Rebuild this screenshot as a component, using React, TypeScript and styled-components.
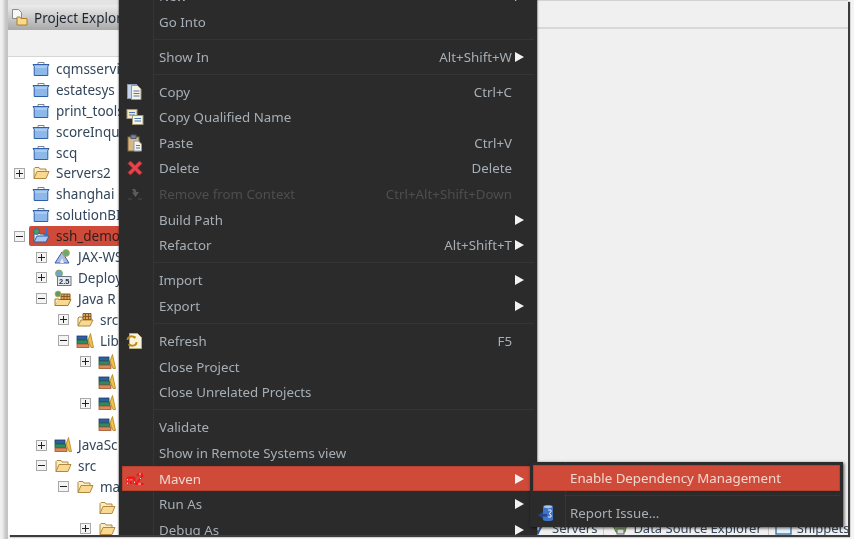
import styled, { createGlobalStyle } from "styled-components";

const GlobalStyle = createGlobalStyle`
  html, body {
    margin: 0;
    padding: 0;
    background: #f2f2f2;
    overflow: hidden;
  }
  svg {
    flex-shrink: 0;
  }
`;

const Page = styled.div`
  width: 854px;
  height: 539px;
  padding: 0 6px 4px 8px;
  box-sizing: border-box;
  background: linear-gradient(to right, #f0f0f0 2px, #c4c4c4 6px, #c4c4c4 8px, #f4f4f4 8px);
  font-family: "Noto Sans", "Open Sans", sans-serif;
`;

const Workbench = styled.div`
  position: relative;
  display: flex;
  width: 840px;
  height: 535px;
  overflow: hidden;
  background: #f0f0f0;
  box-shadow: 2px 2px 1px #3c3c3c;
  filter: blur(0.35px);
`;

const LeftPanel = styled.div`
  display: flex;
  flex-direction: column;
  width: 112px;
  flex-shrink: 0;
  padding-top: 5px;
  box-sizing: border-box;
  background: #e4e4e4;
`;

const PanelTab = styled.div`
  display: flex;
  align-items: center;
  gap: 5px;
  height: 25px;
  padding-left: 3px;
  flex-shrink: 0;
  border-radius: 5px 0 0 0;
  background: linear-gradient(#ececec, #a9a9a9);
  color: #1f2733;
  font-size: 13.5px;
  white-space: nowrap;
  overflow: hidden;
`;

const PanelToolbar = styled.div`
  height: 27px;
  flex-shrink: 0;
  background: #f1f1f1;
  border-bottom: 1px solid #d6d6d6;
  box-sizing: border-box;
`;

const Tree = styled.div`
  flex: 1;
  padding-top: 1.6px;
  background: #ffffff;
  overflow: hidden;
`;

const TreeRow = styled.div<{ $level: number }>`
  display: flex;
  align-items: center;
  height: 20.9px;
  padding-left: ${(p) => 6 + p.$level * 22}px;
  white-space: nowrap;
`;

const ExpanderSlot = styled.div`
  display: flex;
  align-items: center;
  width: 18px;
  flex-shrink: 0;
`;

const Expander = styled.div`
  position: relative;
  width: 9px;
  height: 9px;
  background: #f4f4f4;
  border: 1px solid #a8a8a8;

  &::before {
    content: "";
    position: absolute;
    left: 1px;
    right: 1px;
    top: 4px;
    height: 1px;
    background: #222;
  }
`;

const ExpanderPlus = styled(Expander)`
  &::after {
    content: "";
    position: absolute;
    top: 1px;
    bottom: 1px;
    left: 4px;
    width: 1px;
    background: #222;
  }
`;

const RowContent = styled.div<{ $selected?: boolean }>`
  display: flex;
  align-items: center;
  gap: 6px;
  height: 20px;
  flex: 1;
  margin-left: ${(p) => (p.$selected ? "-3px" : "0")};
  padding-left: ${(p) => (p.$selected ? "3px" : "0")};
  border-radius: 2px;
  background: ${(p) => (p.$selected ? "#cf4a39" : "transparent")};
  color: ${(p) => (p.$selected ? "#2c1f20" : "#33465c")};
  font-size: 13.5px;
`;

const RightPanel = styled.div`
  flex: 1;
  min-width: 0;
  display: flex;
  flex-direction: column;
  border-top: 1px solid #d2d2d2;
  background: #f0f0f0;
`;

const EditorHead = styled.div`
  height: 26px;
  flex-shrink: 0;
  border-bottom: 2px solid #d8d8d8;
`;

const EditorBody = styled.div`
  flex: 1;
`;

const BottomTabs = styled.div`
  display: flex;
  align-items: center;
  height: 15px;
  padding-left: 406px;
  flex-shrink: 0;
  color: #33465c;
  font-size: 13px;
  white-space: nowrap;
  overflow: hidden;
`;

const BottomTab = styled.div`
  display: flex;
  align-items: center;
  gap: 4px;
  height: 100%;
  padding: 0 6px;
  border-right: 1px solid #c8c8c8;
`;

const Menu = styled.div`
  position: absolute;
  left: 111px;
  top: -16.9px;
  width: 418px;
  padding: 0 3px;
  box-sizing: border-box;
  background: linear-gradient(to right, #2b2b2b 34px, #353535 34px, #353535 35px, #2b2b2b 35px);
  box-shadow: 0 0 2px #222;
`;

const SubMenu = styled.div`
  position: absolute;
  left: 522px;
  top: 462px;
  width: 313px;
  height: 65px;
  padding: 3px 3px 0;
  box-sizing: border-box;
  background: linear-gradient(to right, #2b2b2b 35px, #353535 35px, #353535 36px, #2b2b2b 36px);
  box-shadow: 1px 1px 3px rgba(0, 0, 0, 0.7);
`;

const MenuRow = styled.div<{ $active?: boolean; $disabled?: boolean }>`
  display: flex;
  align-items: center;
  height: 25.6px;
  padding-right: 10px;
  box-sizing: border-box;
  background: ${(p) => (p.$active ? "#cf4a38" : "transparent")};
  box-shadow: ${(p) => (p.$active ? "inset 0 0 0 1px #b8402f" : "none")};
  color: ${(p) => (p.$disabled ? "#4e4e4e" : p.$active ? "#f0d8d0" : "#a7afb6")};
  font-size: 13.3px;
  white-space: nowrap;
`;

const MenuIcon = styled.div`
  display: flex;
  align-items: center;
  justify-content: center;
  width: 26px;
  margin-right: 11px;
  flex-shrink: 0;
`;

const MenuLabel = styled.div`
  flex: 1;
`;

const MenuShortcut = styled.div`
  margin-right: 2px;
`;

const ArrowSlot = styled.div`
  display: flex;
  justify-content: flex-end;
  width: 10px;
  flex-shrink: 0;
`;

const Arrow = styled.div`
  width: 0;
  height: 0;
  border-left: 9px solid #f2f2f2;
  border-top: 5px solid transparent;
  border-bottom: 5px solid transparent;
`;

const MenuSeparator = styled.div`
  display: flex;
  align-items: center;
  height: 9.5px;
  margin-left: 31px;

  &::after {
    content: "";
    flex: 1;
    height: 1px;
    background: #353535;
  }
`;

const ProjectIcon = () => (
  <svg width="18" height="18" viewBox="0 0 18 18">
    <path d="M6 4V2.5h6V4" fill="none" stroke="#7b8794" strokeWidth="1" />
    <path d="M1 4.5h16l-1.2 2v9H2.2v-9z" fill="#8db8ea" stroke="#2e5fa8" strokeWidth="1" />
    <path d="M3 6.5h12v1H3z" fill="#c9def6" />
  </svg>
);

const OpenFolderIcon = () => (
  <svg width="18" height="18" viewBox="0 0 18 18">
    <path d="M2 14.5V4.5l1-1h4l1 1.5h6v2.5" fill="#fbecc4" stroke="#b08840" strokeWidth="1" />
    <path d="M2 14.5l3-7h12l-3 7z" fill="#f9d98f" stroke="#b08840" strokeWidth="1" />
  </svg>
);

const PackageFolderIcon = () => (
  <svg width="18" height="18" viewBox="0 0 18 18">
    <path d="M2 15V7l1-1h3l1 1h8v2" fill="#fbecc4" stroke="#b08840" strokeWidth="1" />
    <path d="M2 15l3-6h12l-3 6z" fill="#f9d98f" stroke="#b08840" strokeWidth="1" />
    <path d="M7 2.5h8v6H7zM9.5 2.5v6M12.5 2.5v6M7 5.5h8" fill="#d9a85a" stroke="#8c5a20" strokeWidth="1" />
  </svg>
);

const JavaProjectIcon = () => (
  <svg width="18" height="18" viewBox="0 0 18 18">
    <path d="M2 15V7l1-1h4l1 1h6v2" fill="#fbecc4" stroke="#2e5fa8" strokeWidth="1" />
    <path d="M2 15l3-6h12l-3 6z" fill="#a9c8ee" stroke="#2e5fa8" strokeWidth="1" />
    <circle cx="4.5" cy="4.5" r="3" fill="#4d9a5f" stroke="#2e5fa8" strokeWidth="0.8" />
    <path d="M14.5 1v6c0 1.5-2.5 1.5-3 0" fill="none" stroke="#3b6fc0" strokeWidth="1.5" />
  </svg>
);

const JaxWsIcon = () => (
  <svg width="18" height="18" viewBox="0 0 18 18">
    <path d="M1 15L8 4l7 11z" fill="#a9bde6" stroke="#3a5ca8" strokeWidth="1" />
    <path d="M6 15l2-5 2 5z" fill="#e8eefa" />
    <circle cx="12" cy="5" r="3.5" fill="#6ba86f" stroke="#c8a850" strokeWidth="0.8" />
  </svg>
);

const DeployIcon = () => (
  <svg width="18" height="18" viewBox="0 0 18 18">
    <circle cx="5" cy="4.5" r="3.5" fill="#6ba8c8" stroke="#8c9a50" strokeWidth="0.8" />
    <rect x="3.5" y="7.5" width="13.5" height="9" fill="#e6ebf2" stroke="#6a7482" strokeWidth="1" />
    <text x="10.2" y="15" textAnchor="middle" fontSize="7.5" fontWeight="700" fill="#25344a" fontFamily="Liberation Sans, sans-serif">
      2.5
    </text>
  </svg>
);

const JavaResourcesIcon = () => (
  <svg width="18" height="18" viewBox="0 0 18 18">
    <path d="M1 15.5l3-6h13l-3 6z" fill="#f9d98f" stroke="#a87a30" strokeWidth="1" />
    <path d="M1 15.5V9h4" fill="#fbecc4" stroke="#a87a30" strokeWidth="1" />
    <path d="M7 4h9v5.5H7zM10 4v5.5M13 4v5.5M7 6.5h9" fill="#d9a85a" stroke="#8c5a20" strokeWidth="1" />
    <circle cx="4" cy="4" r="3" fill="#5c9c68" stroke="#c8a850" strokeWidth="0.8" />
  </svg>
);

const LibraryIcon = () => (
  <svg width="18" height="18" viewBox="0 0 18 18">
    <rect x="1" y="4" width="10" height="3.5" fill="#2f5f9e" stroke="#1d3c6e" strokeWidth="0.8" />
    <rect x="1" y="8" width="11" height="3.5" fill="#2e8a63" stroke="#1c5c40" strokeWidth="0.8" />
    <rect x="1" y="12" width="12" height="3.5" fill="#d9895a" stroke="#9c5428" strokeWidth="0.8" />
    <path d="M12 8L14.5 1.5l3 14h-2.5z" fill="#f2c04a" stroke="#b08420" strokeWidth="0.8" />
  </svg>
);

const TabFolderIcon = () => (
  <svg width="18" height="19" viewBox="0 0 18 19">
    <path d="M1.5 1.5h6l3 3v6h-9z" fill="#f7f7f7" stroke="#8a8a8a" strokeWidth="1" />
    <path d="M6 17V9h3l1 1.5h6V17z" fill="#fbd98a" stroke="#a8802e" strokeWidth="1" />
  </svg>
);

const CopyIcon = () => (
  <svg width="18" height="18" viewBox="0 0 18 18">
    <rect x="1.5" y="1.5" width="9" height="14" fill="#c4d4ec" stroke="#8c9cb4" />
    <path d="M5.5 2.5h6l3.5 3.5v10.5h-9.5z" fill="#f6f4e8" stroke="#a09878" />
    <path d="M7.5 8h6M7.5 10.5h6M7.5 13h6" stroke="#4a78b8" />
  </svg>
);

const CopyQualifiedIcon = () => (
  <svg width="18" height="18" viewBox="0 0 18 18">
    <rect x="1" y="1.5" width="10" height="9" fill="#f3e7c4" stroke="#a09878" />
    <path d="M3 4.5h6M3 7h6" stroke="#4a78b8" />
    <rect x="6.5" y="7.5" width="10.5" height="9" fill="#f6f4e8" stroke="#a09878" />
    <path d="M8.5 10.5h6.5M8.5 13h6.5" stroke="#4a78b8" />
  </svg>
);

const PasteIcon = () => (
  <svg width="18" height="18" viewBox="0 0 18 18">
    <rect x="2" y="3" width="11" height="14" fill="#d6b888" stroke="#8a6a38" />
    <rect x="5" y="1" width="5" height="3.5" fill="#7a869c" stroke="#4f5a70" />
    <path d="M8 7h4.5l3 3v7H8z" fill="#f6f4e8" stroke="#8c98a8" />
    <path d="M10 11.5h4M10 14h4" stroke="#4a78b8" />
  </svg>
);

const DeleteIcon = () => (
  <svg width="18" height="18" viewBox="0 0 18 18">
    <path d="M2 4.5L4.5 2 9 6.5 13.5 2 16 4.5 11.5 9 16 13.5 13.5 16 9 11.5 4.5 16 2 13.5 6.5 9z" fill="#e8434a" stroke="#c02a34" strokeWidth="0.6" />
  </svg>
);

const RemoveIcon = () => (
  <svg width="18" height="18" viewBox="0 0 18 18">
    <path d="M6 4l3 0 1.5 3h2.5L9.5 12 6 7.5h2z" fill="#5c5c5c" />
    <path d="M2 14h4M12 14h4" stroke="#4a4a4a" />
  </svg>
);

const RefreshIcon = () => (
  <svg width="18" height="18" viewBox="0 0 18 18">
    <path d="M3.5 1.5h8l4 4v11h-12z" fill="#f8f4dc" stroke="#b4ac84" />
    <path d="M1.5 8a4 3.5 0 0 1 7-2.5l1-1M10.5 10a4 3.5 0 0 1-7 2.5l-1 1" fill="none" stroke="#c08a1c" strokeWidth="1.8" />
  </svg>
);

const MavenIcon = () => (
  <svg width="18" height="12" viewBox="0 0 18 12">
    <path d="M1.5 11V4.5M5 11V4.5M8.5 11V4.5M1.5 4.5h7" fill="none" stroke="#fa1018" strokeWidth="2" />
    <path d="M1.5 6v1.5M1.5 9.5V11M5 6v1.5M8.5 8.5v1.5" stroke="#ffd8d0" strokeWidth="1" />
    <path d="M11 3l1.5-2h3l1 2-5 6-1 2h7" fill="none" stroke="#fa1018" strokeWidth="1.8" />
    <path d="M13 1h2M14 6l1-1M12 11h3" stroke="#ffe0d8" strokeWidth="1" />
  </svg>
);

const ReportIcon = () => (
  <svg width="18" height="18" viewBox="0 0 18 18">
    <path d="M6 2.5c0-2 10-2 10 0v13c0 2-10 2-10 0z" fill="#3f74c8" />
    <ellipse cx="11" cy="2.8" rx="4.2" ry="1.4" fill="#a9c8f0" />
    <path d="M1 11l5-3v2h4v2.5H6v2z" fill="#22478c" />
    <path d="M11 6h3v2l-2 1.5 2 1.5v2h-3" fill="none" stroke="#e6eefa" strokeWidth="1" />
  </svg>
);

const ServersIcon = () => (
  <svg width="16" height="14" viewBox="0 0 16 14">
    <path d="M1 2l5 10 5-10" fill="none" stroke="#2e5fa8" strokeWidth="2" />
  </svg>
);

const DataSourceIcon = () => (
  <svg width="19" height="14" viewBox="0 0 19 14">
    <path d="M2 2l4 9h9l2-9" fill="#8cc060" stroke="#4e7a30" />
    <rect x="7" y="8" width="7" height="5" fill="#d8d8d8" stroke="#666" />
  </svg>
);

const SnippetsIcon = () => (
  <svg width="18" height="14" viewBox="0 0 18 14">
    <rect x="1" y="1" width="15" height="12" fill="#e8f0fa" stroke="#3a78a8" strokeWidth="1.4" />
  </svg>
);

type ExpanderKind = "plus" | "minus" | "none";

type TreeNode = {
  level: number;
  expander: ExpanderKind;
  icon: React.ReactNode;
  label: string;
  selected?: boolean;
};

const treeNodes: TreeNode[] = [
  { level: 0, expander: "none", icon: <ProjectIcon />, label: "cqmsservice" },
  { level: 0, expander: "none", icon: <ProjectIcon />, label: "estatesys" },
  { level: 0, expander: "none", icon: <ProjectIcon />, label: "print_tools" },
  { level: 0, expander: "none", icon: <ProjectIcon />, label: "scoreInquiry" },
  { level: 0, expander: "none", icon: <ProjectIcon />, label: "scq" },
  { level: 0, expander: "plus", icon: <OpenFolderIcon />, label: "Servers2" },
  { level: 0, expander: "none", icon: <ProjectIcon />, label: "shanghai" },
  { level: 0, expander: "none", icon: <ProjectIcon />, label: "solutionBI" },
  { level: 0, expander: "minus", icon: <JavaProjectIcon />, label: "ssh_demo", selected: true },
  { level: 1, expander: "plus", icon: <JaxWsIcon />, label: "JAX-WS" },
  { level: 1, expander: "plus", icon: <DeployIcon />, label: "Deploy" },
  { level: 1, expander: "minus", icon: <JavaResourcesIcon />, label: "Java R" },
  { level: 2, expander: "plus", icon: <PackageFolderIcon />, label: "src" },
  { level: 2, expander: "minus", icon: <LibraryIcon />, label: "Lib" },
  { level: 3, expander: "plus", icon: <LibraryIcon />, label: "" },
  { level: 3, expander: "none", icon: <LibraryIcon />, label: "" },
  { level: 3, expander: "plus", icon: <LibraryIcon />, label: "" },
  { level: 3, expander: "none", icon: <LibraryIcon />, label: "" },
  { level: 1, expander: "plus", icon: <LibraryIcon />, label: "JavaSc" },
  { level: 1, expander: "minus", icon: <OpenFolderIcon />, label: "src" },
  { level: 2, expander: "minus", icon: <OpenFolderIcon />, label: "ma" },
  { level: 3, expander: "none", icon: <OpenFolderIcon />, label: "" },
  { level: 3, expander: "plus", icon: <OpenFolderIcon />, label: "" },
];

type MenuEntry =
  | "separator"
  | {
      label: string;
      shortcut?: string;
      arrow?: boolean;
      icon?: React.ReactNode;
      disabled?: boolean;
      active?: boolean;
    };

const menuEntries: MenuEntry[] = [
  { label: "New", arrow: true },
  { label: "Go Into" },
  "separator",
  { label: "Show In", shortcut: "Alt+Shift+W", arrow: true },
  "separator",
  { label: "Copy", shortcut: "Ctrl+C", icon: <CopyIcon /> },
  { label: "Copy Qualified Name", icon: <CopyQualifiedIcon /> },
  { label: "Paste", shortcut: "Ctrl+V", icon: <PasteIcon /> },
  { label: "Delete", shortcut: "Delete", icon: <DeleteIcon /> },
  { label: "Remove from Context", shortcut: "Ctrl+Alt+Shift+Down", icon: <RemoveIcon />, disabled: true },
  { label: "Build Path", arrow: true },
  { label: "Refactor", shortcut: "Alt+Shift+T", arrow: true },
  "separator",
  { label: "Import", arrow: true },
  { label: "Export", arrow: true },
  "separator",
  { label: "Refresh", shortcut: "F5", icon: <RefreshIcon /> },
  { label: "Close Project" },
  { label: "Close Unrelated Projects" },
  "separator",
  { label: "Validate" },
  { label: "Show in Remote Systems view" },
  { label: "Maven", arrow: true, icon: <MavenIcon />, active: true },
  { label: "Run As", arrow: true },
  { label: "Debug As", arrow: true },
];

export default function App() {
  return (
    <Page>
      <GlobalStyle />
      <Workbench>
        <LeftPanel>
          <PanelTab>
            <TabFolderIcon />
            Project Explorer
          </PanelTab>
          <PanelToolbar />
          <Tree>
            {treeNodes.map((node, i) => (
              <TreeRow key={i} $level={node.level}>
                <ExpanderSlot>
                  {node.expander === "plus" && <ExpanderPlus />}
                  {node.expander === "minus" && <Expander />}
                </ExpanderSlot>
                <RowContent $selected={node.selected}>
                  {node.icon}
                  {node.label}
                </RowContent>
              </TreeRow>
            ))}
          </Tree>
        </LeftPanel>

        <RightPanel>
          <EditorHead />
          <EditorBody />
          <BottomTabs>
            <BottomTab>
              <ServersIcon />
              Servers
            </BottomTab>
            <BottomTab>
              <DataSourceIcon />
              Data Source Explorer
            </BottomTab>
            <BottomTab>
              <SnippetsIcon />
              Snippets
            </BottomTab>
          </BottomTabs>
        </RightPanel>

        <Menu>
          {menuEntries.map((entry, i) =>
            entry === "separator" ? (
              <MenuSeparator key={i} />
            ) : (
              <MenuRow key={i} $active={entry.active} $disabled={entry.disabled}>
                <MenuIcon>{entry.icon}</MenuIcon>
                <MenuLabel>{entry.label}</MenuLabel>
                {entry.shortcut && <MenuShortcut>{entry.shortcut}</MenuShortcut>}
                <ArrowSlot>{entry.arrow && <Arrow />}</ArrowSlot>
              </MenuRow>
            )
          )}
        </Menu>

        <SubMenu>
          <MenuRow $active>
            <MenuIcon />
            <MenuLabel>Enable Dependency Management</MenuLabel>
          </MenuRow>
          <MenuSeparator />
          <MenuRow>
            <MenuIcon>
              <ReportIcon />
            </MenuIcon>
            <MenuLabel>Report Issue...</MenuLabel>
          </MenuRow>
        </SubMenu>
      </Workbench>
    </Page>
  );
}
